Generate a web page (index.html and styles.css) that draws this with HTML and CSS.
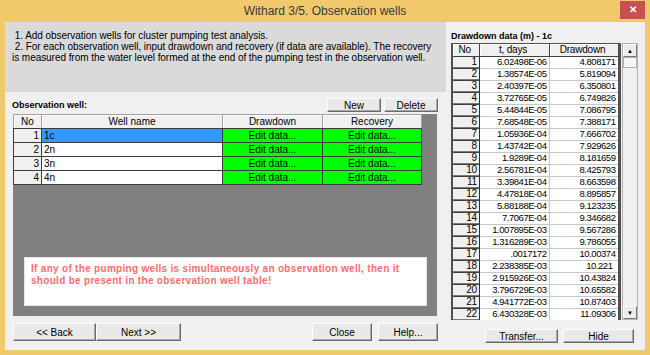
FILE: index.html
```html
<!DOCTYPE html>
<html lang="en">
<head>
    <meta charset="UTF-8">
    <title>Withard 3/5. Observation wells</title>
    <link rel="stylesheet" href="styles.css">
</head>
<body>
<div class="window">
    <div class="titlebar">
        <span></span>
        <span class="title">Withard 3/5. Observation wells</span>
        <span class="close">✕</span>
    </div>

    <div class="client">
        <div class="left-panel">
            <div class="intro">
                &nbsp;1. Add observation wells for cluster pumping test analysis.<br>
                &nbsp;2. For each observation well, input drawdown and recovery (if data are available). The recovery<br>
                is measured from the water level formed at the end of the pumping test in the observation well.
            </div>

            <div class="wells-head">
                <span class="label">Observation well:</span>
                <div class="btn-row">
                    <button class="btn small">New</button>
                    <button class="btn small">Delete</button>
                </div>
            </div>

            <div class="wells-box">
                <table class="wells">
                    <colgroup>
                        <col style="width:28px"><col style="width:181px"><col style="width:100px"><col style="width:99px">
                    </colgroup>
                    <tr class="head">
                        <td>No</td><td>Well name</td><td>Drawdown</td><td>Recovery</td>
                    </tr>
                    <tr>
                        <td class="num">1</td><td class="name selected">1c</td>
                        <td class="edit">Edit data...</td><td class="edit">Edit data...</td>
                    </tr>
                    <tr>
                        <td class="num">2</td><td class="name">2n</td>
                        <td class="edit">Edit data...</td><td class="edit">Edit data...</td>
                    </tr>
                    <tr>
                        <td class="num">3</td><td class="name">3n</td>
                        <td class="edit">Edit data...</td><td class="edit">Edit data...</td>
                    </tr>
                    <tr>
                        <td class="num">4</td><td class="name">4n</td>
                        <td class="edit">Edit data...</td><td class="edit">Edit data...</td>
                    </tr>
                </table>

                <div class="notice">
                    If any of the pumping wells is simultaneously an observation well, then it<br>
                    should be present in the observation well table!
                </div>
            </div>

            <div class="nav">
                <div class="pair">
                    <button class="btn back">&lt;&lt; Back</button><button class="btn next">Next &gt;&gt;</button>
                </div>
                <div class="pair spaced">
                    <button class="btn wide">Close</button>
                    <button class="btn wide">Help...</button>
                </div>
            </div>
        </div>

        <div class="right-panel">
            <div class="data-title">Drawdown data (m) - 1c</div>
            <div class="data-box">
                <div class="data-grid">
                    <table class="data">
                        <colgroup>
                            <col style="width:26px"><col style="width:70px"><col style="width:69px">
                        </colgroup>
                        <tr class="head"><td>No</td><td>t, days</td><td>Drawdown</td></tr>
                        <tr><td class="fix">1</td><td>6.02498E-06</td><td>4.808171</td></tr>
                        <tr><td class="fix">2</td><td>1.38574E-05</td><td>5.819094</td></tr>
                        <tr><td class="fix">3</td><td>2.40397E-05</td><td>6.350801</td></tr>
                        <tr><td class="fix">4</td><td>3.72765E-05</td><td>6.749826</td></tr>
                        <tr><td class="fix">5</td><td>5.44844E-05</td><td>7.086795</td></tr>
                        <tr><td class="fix">6</td><td>7.68548E-05</td><td>7.388171</td></tr>
                        <tr><td class="fix">7</td><td>1.05936E-04</td><td>7.666702</td></tr>
                        <tr><td class="fix">8</td><td>1.43742E-04</td><td>7.929626</td></tr>
                        <tr><td class="fix">9</td><td>1.9289E-04</td><td>8.181659</td></tr>
                        <tr><td class="fix">10</td><td>2.56781E-04</td><td>8.425793</td></tr>
                        <tr><td class="fix">11</td><td>3.39841E-04</td><td>8.663598</td></tr>
                        <tr><td class="fix">12</td><td>4.47818E-04</td><td>8.895857</td></tr>
                        <tr><td class="fix">13</td><td>5.88188E-04</td><td>9.123235</td></tr>
                        <tr><td class="fix">14</td><td>7.7067E-04</td><td>9.346682</td></tr>
                        <tr><td class="fix">15</td><td>1.007895E-03</td><td>9.567286</td></tr>
                        <tr><td class="fix">16</td><td>1.316289E-03</td><td>9.786055</td></tr>
                        <tr><td class="fix">17</td><td>.0017172</td><td>10.00374</td></tr>
                        <tr><td class="fix">18</td><td>2.238385E-03</td><td class="pad">10.221</td></tr>
                        <tr><td class="fix">19</td><td>2.915926E-03</td><td>10.43824</td></tr>
                        <tr><td class="fix">20</td><td>3.796729E-03</td><td>10.65582</td></tr>
                        <tr><td class="fix">21</td><td>4.941772E-03</td><td>10.87403</td></tr>
                        <tr><td class="fix">22</td><td>6.430328E-03</td><td>11.09306</td></tr>
                    </table>
                </div>
                <div class="vscroll">
                    <div class="arrow">▲</div>
                    <div class="thumb"></div>
                    <div class="track"></div>
                    <div class="arrow">▼</div>
                </div>
            </div>
            <div class="data-btns">
                <button class="btn transfer">Transfer...</button>
                <button class="btn hide">Hide</button>
            </div>
        </div>
    </div>
</div>
</body>
</html>
```

FILE: styles.css
```css
* {
    box-sizing: border-box;
}

body {
    margin: 0;
    background: #f1c96c;
    font-family: "Liberation Sans", Arial, sans-serif;
    font-size: 10px;
    color: #000;
}

.window {
    width: 650px;
    height: 355px;
    background: #f1c96c;
    display: flex;
    flex-direction: column;
}

/* title bar */
.titlebar {
    height: 22px;
    display: grid;
    grid-template-columns: 1fr auto 1fr;
    align-items: start;
}

.title {
    font-size: 12px;
    line-height: 22px;
    color: #3a3a3a;
}

.close {
    justify-self: end;
    width: 25px;
    height: 18px;
    margin: 1px 5px 0 0;
    background: #c75050;
    color: #fff;
    font-size: 10px;
    font-weight: bold;
    line-height: 17px;
    text-align: center;
}

.client {
    flex: 1;
    min-height: 0;
    margin: 0 5px 5px;
    background: #f0f0f0;
    display: flex;
}

/* left side */
.left-panel {
    width: 441px;
    display: flex;
    flex-direction: column;
}

.intro {
    height: 70px;
    flex-shrink: 0;
    background: #dadada;
    padding: 8px 6px 0 7px;
    line-height: 11px;
    letter-spacing: -0.05px;
    white-space: nowrap;
}

.wells-head {
    display: flex;
    justify-content: space-between;
    align-items: center;
    height: 14px;
    margin: 6px 8px 2px 7px;
}

.label,
.data-title {
    font-weight: bold;
    font-size: 9px;
}

.btn-row {
    display: flex;
    gap: 3px;
}

.btn {
    font-family: inherit;
    font-size: 10px;
    color: #000;
    background: #e9e9e9;
    border: 1px solid;
    border-color: #fdfdfd #6a6a6a #6a6a6a #fdfdfd;
    box-shadow: inset -1px -1px #a8a8a8;
    padding: 0;
    margin: 0;
}

.btn.small {
    width: 54px;
    height: 14px;
    line-height: 11px;
}

.wells-box {
    height: 202px;
    flex-shrink: 0;
    margin: 0 9px 0 8px;
    background: #808080;
    display: flex;
    flex-direction: column;
}

table {
    border-collapse: collapse;
    table-layout: fixed;
}

.wells {
    width: 408px;
}

.wells td {
    height: 14px;
    padding: 0 2px;
    border: 1px solid #3c3c3c;
    line-height: 12px;
    white-space: nowrap;
    overflow: hidden;
}

.wells .head td {
    background: #f0f0f0;
    text-align: center;
    border-color: #a0a0a0 #a0a0a0 #3c3c3c #a0a0a0;
    box-shadow: inset 1px 1px #fff;
}

.wells .num {
    background: #f0f0f0;
    text-align: right;
}

.wells .name {
    background: #fff;
}

.wells .selected {
    background: #3399ff;
}

.wells .edit {
    background: #00ff00;
    text-align: center;
}

.notice {
    margin: auto 10px 10px 11px;
    height: 49px;
    background: #fff;
    border: 1px solid #e6e6e6;
    padding: 5px 6px;
    color: #ff6b6b;
    font-weight: bold;
    line-height: 12px;
    letter-spacing: 0.3px;
    white-space: nowrap;
}

.nav {
    display: flex;
    justify-content: space-between;
    margin: 7px 8px 0;
}

.pair {
    display: flex;
}

.pair.spaced {
    gap: 6px;
}

.nav .btn {
    height: 18px;
}

.btn.back {
    width: 83px;
}

.btn.next {
    width: 85px;
}

.btn.wide {
    width: 60px;
}

/* right side */
.right-panel {
    width: 199px;
    padding-left: 5px;
    display: flex;
    flex-direction: column;
}

.data-title {
    margin-top: 8px;
    line-height: 13px;
}

.data-box {
    display: flex;
    flex-shrink: 0;
    height: 277px;
    width: 187px;
    overflow: hidden;
}

.data-grid {
    width: 170px;
    border-left: 2px solid #505050;
    border-right: 3px solid #505050;
    border-top: 1px solid #505050;
    overflow: hidden;
}

.data {
    width: 165px;
    font-size: 9.5px;
    letter-spacing: -0.45px;
}

.data td {
    height: 12px;
    padding: 0 2px 0 0;
    line-height: 10px;
    text-align: right;
    background: #fff;
    border-right: 1px solid #c8c8c8;
    border-bottom: 1px solid #c8c8c8;
    white-space: nowrap;
    overflow: hidden;
}

.data td.pad {
    padding-right: 5px;
}

.data .head td {
    background: #f0f0f0;
    text-align: center;
    font-size: 10px;
    letter-spacing: -0.2px;
    border-right: 1px solid #404040;
    border-bottom: 1px solid #404040;
    box-shadow: inset 1px 1px #fff;
}

.data td.fix {
    background: #f0f0f0;
    font-size: 10px;
    border-right: 1px solid #303030;
    border-bottom: 1px solid #404040;
    box-shadow: inset 0 -1px #7a7a7a;
}

.vscroll {
    width: 16px;
    margin-left: 1px;
    background: #f0f0f0;
    border: 1px solid #b4b4b4;
    display: flex;
    flex-direction: column;
}

.arrow {
    height: 13px;
    flex-shrink: 0;
    font-size: 6px;
    line-height: 12px;
    text-align: center;
    background: #ececec;
    border: 1px solid;
    border-color: #fff #7a7a7a #7a7a7a #fff;
}

.thumb {
    height: 11px;
    flex-shrink: 0;
    background: #f6f6f6;
    border: 1px solid #b0b0b0;
}

.track {
    flex: 1;
}

.data-btns {
    display: flex;
    gap: 5px;
    margin: 9px 0 0 34px;
}

.data-btns .btn {
    height: 14px;
    line-height: 11px;
}

.btn.transfer {
    width: 73px;
}

.btn.hide {
    width: 71px;
}
```
